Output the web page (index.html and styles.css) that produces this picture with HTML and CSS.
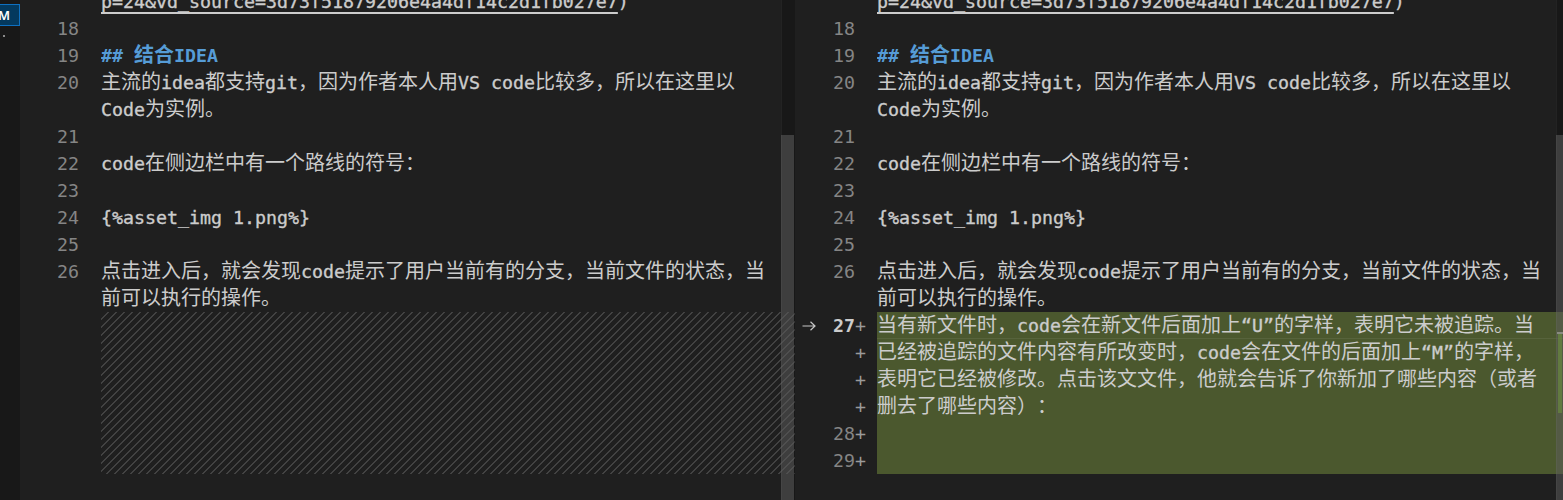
FILE: index.html
```html
<!DOCTYPE html>
<html lang="zh-CN">
<head>
<meta charset="utf-8">
<title>diff</title>
<link rel="stylesheet" href="styles.css">
</head>
<body>
<div class="app">
  <aside class="strip">
    <div class="badge">M</div>
    <div class="dot"></div>
  </aside>

  <section class="editor left">
    <div class="lines">
      <div class="row"><div class="gutter"></div><div class="code"><span class="en"><span class="link">p=24&amp;vd_source=3d73f51879206e4a4df14c2d1fb027e7</span>)</span></div></div>
      <div class="row"><div class="gutter">18</div><div class="code"></div></div>
      <div class="row"><div class="gutter">19</div><div class="code"><span class="h"><span class="en">## </span>结合<span class="en">IDEA</span></span></div></div>
      <div class="row"><div class="gutter">20</div><div class="code">主流的<span class="en">idea</span>都支持<span class="en">git</span>，因为作者本人用<span class="en">VS code</span>比较多，所以在这里以</div></div>
      <div class="row"><div class="gutter"></div><div class="code"><span class="en">Code</span>为实例。</div></div>
      <div class="row"><div class="gutter">21</div><div class="code"></div></div>
      <div class="row"><div class="gutter">22</div><div class="code"><span class="en">code</span>在侧边栏中有一个路线的符号：</div></div>
      <div class="row"><div class="gutter">23</div><div class="code"></div></div>
      <div class="row"><div class="gutter">24</div><div class="code"><span class="en">{%asset_img 1.png%}</span></div></div>
      <div class="row"><div class="gutter">25</div><div class="code"></div></div>
      <div class="row"><div class="gutter">26</div><div class="code">点击进入后，就会发现<span class="en">code</span>提示了用户当前有的分支，当前文件的状态，当</div></div>
      <div class="row"><div class="gutter"></div><div class="code">前可以执行的操作。</div></div>
      <div class="filler"><div class="gutter"></div><div class="hatch"></div></div>
    </div>
    <div class="vscroll"><div class="thumb"></div></div>
  </section>

  <section class="editor right">
    <div class="lines">
      <div class="row"><div class="gutter"><span class="arrow"></span><span class="num"></span><span class="plus"></span></div><div class="code"><span class="en"><span class="link">p=24&amp;vd_source=3d73f51879206e4a4df14c2d1fb027e7</span>)</span></div></div>
      <div class="row"><div class="gutter"><span class="arrow"></span><span class="num">18</span><span class="plus"></span></div><div class="code"></div></div>
      <div class="row"><div class="gutter"><span class="arrow"></span><span class="num">19</span><span class="plus"></span></div><div class="code"><span class="h"><span class="en">## </span>结合<span class="en">IDEA</span></span></div></div>
      <div class="row"><div class="gutter"><span class="arrow"></span><span class="num">20</span><span class="plus"></span></div><div class="code">主流的<span class="en">idea</span>都支持<span class="en">git</span>，因为作者本人用<span class="en">VS code</span>比较多，所以在这里以</div></div>
      <div class="row"><div class="gutter"><span class="arrow"></span><span class="num"></span><span class="plus"></span></div><div class="code"><span class="en">Code</span>为实例。</div></div>
      <div class="row"><div class="gutter"><span class="arrow"></span><span class="num">21</span><span class="plus"></span></div><div class="code"></div></div>
      <div class="row"><div class="gutter"><span class="arrow"></span><span class="num">22</span><span class="plus"></span></div><div class="code"><span class="en">code</span>在侧边栏中有一个路线的符号：</div></div>
      <div class="row"><div class="gutter"><span class="arrow"></span><span class="num">23</span><span class="plus"></span></div><div class="code"></div></div>
      <div class="row"><div class="gutter"><span class="arrow"></span><span class="num">24</span><span class="plus"></span></div><div class="code"><span class="en">{%asset_img 1.png%}</span></div></div>
      <div class="row"><div class="gutter"><span class="arrow"></span><span class="num">25</span><span class="plus"></span></div><div class="code"></div></div>
      <div class="row"><div class="gutter"><span class="arrow"></span><span class="num">26</span><span class="plus"></span></div><div class="code">点击进入后，就会发现<span class="en">code</span>提示了用户当前有的分支，当前文件的状态，当</div></div>
      <div class="row"><div class="gutter"><span class="arrow"></span><span class="num"></span><span class="plus"></span></div><div class="code">前可以执行的操作。</div></div>
      <div class="row added cur"><div class="gutter"><span class="arrow"><svg width="14" height="10" viewBox="0 0 14 10"><path d="M0.5 5H13M8.5 0.8L13 5L8.5 9.2" fill="none" stroke="#c8c8c8" stroke-width="1.2"/></svg></span><span class="num active">27</span><span class="plus">+</span></div><div class="code">当有新文件时，<span class="en">code</span>会在新文件后面加上<span class="en">“U”</span>的字样，表明它未被追踪。当</div></div>
      <div class="row added"><div class="gutter"><span class="arrow"></span><span class="num"></span><span class="plus">+</span></div><div class="code">已经被追踪的文件内容有所改变时，<span class="en">code</span>会在文件的后面加上<span class="en">“M”</span>的字样，</div></div>
      <div class="row added"><div class="gutter"><span class="arrow"></span><span class="num"></span><span class="plus">+</span></div><div class="code">表明它已经被修改。点击该文文件，他就会告诉了你新加了哪些内容（或者</div></div>
      <div class="row added"><div class="gutter"><span class="arrow"></span><span class="num"></span><span class="plus">+</span></div><div class="code">删去了哪些内容）：</div></div>
      <div class="row added"><div class="gutter"><span class="arrow"></span><span class="num">28</span><span class="plus">+</span></div><div class="code"></div></div>
      <div class="row added"><div class="gutter"><span class="arrow"></span><span class="num">29</span><span class="plus">+</span></div><div class="code"></div></div>
    </div>
    <div class="vscroll">
      <div class="thumb"></div>
      <div class="mark-cursor"></div>
      <div class="mark-add"></div>
    </div>
  </section>
</div>
</body>
</html>
```
FILE: styles.css
```css
html, body {
  margin: 0;
  padding: 0;
}

body {
  width: 1563px;
  height: 500px;
  overflow: hidden;
  background: #1f1f1f;
  color: #cccccc;
  font-family: "Noto Sans CJK SC", "Noto Sans", sans-serif;
}

.app {
  display: flex;
  height: 500px;
  width: max-content;
}

/* left activity strip */
.strip {
  width: 20px;
  flex-shrink: 0;
  background: #181818;
  padding-top: 4px;
  box-sizing: border-box;
}

.badge {
  width: 20px;
  height: 22px;
  box-sizing: border-box;
  background: #04395e;
  border: 1px solid #0e70c0;
  border-left: none;
  color: #ffffff;
  font-family: "Noto Sans", sans-serif;
  font-size: 13px;
  font-weight: 600;
  line-height: 20px;
  text-indent: -2px;
  overflow: hidden;
}

.dot {
  width: 2px;
  height: 2px;
  margin: 9px 0 0 3px;
  background: #8a8a8a;
}

/* editors */
.editor {
  position: relative;
  width: 775px;
  height: 500px;
  flex-shrink: 0;
  overflow: hidden;
}

.lines {
  margin-top: -12px;
}

.row {
  display: flex;
  height: 27px;
}

.gutter {
  flex-shrink: 0;
  box-sizing: border-box;
  font-family: "DejaVu Sans Mono", monospace;
  font-size: 18.27px;
  line-height: 27px;
  height: 27px;
  color: #858585;
}

.left .gutter {
  width: 81px;
  padding-right: 22px;
  text-align: right;
}

.right .gutter {
  width: 82px;
  display: flex;
  padding-left: 7px;
  padding-right: 11px;
}

.right .arrow {
  width: 14px;
  display: flex;
  align-items: center;
}

.right .arrow svg {
  display: block;
}

.right .num {
  flex: 1;
  text-align: right;
}

.right .num.active {
  color: #cccccc;
  font-weight: bold;
}

.right .plus {
  width: 11px;
  text-align: center;
  color: #9a9a9a;
}

.code {
  flex: 1;
  height: 27px;
  font-size: 20px;
  line-height: 23px;
  white-space: pre;
  overflow: hidden;
  text-spacing-trim: space-all;
  font-feature-settings: normal;
}

.en {
  font-family: "DejaVu Sans Mono", monospace;
  font-size: 18.27px;
  -webkit-text-stroke: 0.35px currentColor;
}

.h {
  color: #569cd6;
  font-weight: bold;
}

.h .en {
  -webkit-text-stroke: 0;
}

.link {
  text-decoration: underline;
  text-decoration-thickness: 2px;
  text-underline-offset: 4px;
}

.added .code {
  background: #4b582e;
}

.cur .code {
  box-shadow: inset 0 -1px 0 rgba(255, 255, 255, 0.07);
}

.filler {
  display: flex;
  height: 162px;
}

.filler .gutter {
  height: 162px;
}

.hatch {
  flex: 1;
  height: 162px;
  background-image: linear-gradient(-45deg,
    rgba(204, 204, 204, 0.2) 12.5%, transparent 12.5%,
    transparent 50%, rgba(204, 204, 204, 0.2) 50%,
    rgba(204, 204, 204, 0.2) 62.5%, transparent 62.5%,
    transparent 100%);
  background-size: 8px 8px;
}

/* overlay scrollbars */
.vscroll {
  position: absolute;
  top: 0;
  right: 0;
  width: 14px;
  height: 500px;
  background: rgba(0, 0, 0, 0.2);
  box-shadow: inset 1px 0 0 rgba(255, 255, 255, 0.05);
}

.thumb {
  position: absolute;
  top: 135px;
  left: 0;
  width: 13px;
  bottom: 0;
  background: rgba(121, 121, 121, 0.4);
}

.mark-cursor {
  position: absolute;
  top: 332px;
  left: 1px;
  right: 0;
  height: 2px;
  background: rgba(200, 200, 200, 0.45);
}

.mark-add {
  position: absolute;
  top: 334px;
  left: 2px;
  width: 4px;
  height: 79px;
  background: rgba(110, 150, 60, 0.55);
}
```
